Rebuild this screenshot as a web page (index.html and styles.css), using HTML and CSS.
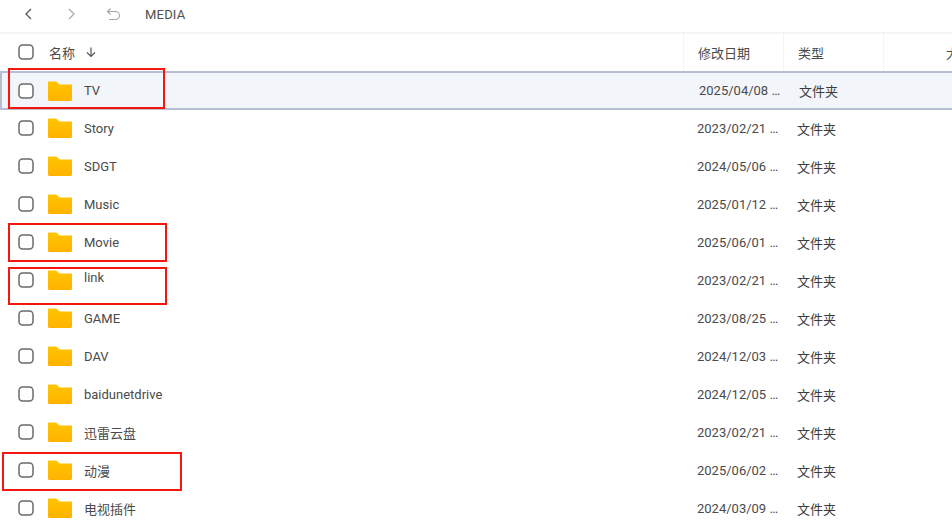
FILE: index.html
```html
<!DOCTYPE html>
<html lang="zh">
<head>
<meta charset="utf-8">
<title>MEDIA</title>
<link rel="stylesheet" href="styles.css">
</head>
<body>
<svg class="defs" width="0" height="0" aria-hidden="true">
  <defs>
    <linearGradient id="fg" x1="0" y1="0" x2="0" y2="1"><stop offset="0" stop-color="#ffc400"/><stop offset="1" stop-color="#ffb300"/></linearGradient>
    <symbol id="folder" viewBox="0 0 24 20"><path d="M1 0.5h6.6c.5 0 .9.2 1.2.5L11.6 3.4H23c.6 0 1 .4 1 1V18.500c0 .8-.6 1.500-1.400 1.500H1.400C.6 20 0 19.300 0 18.500V1.500C0 .9.400.5 1 .5z" fill="url(#fg)"/></symbol>
    <symbol id="check" viewBox="0 0 16 16"><rect x="1" y="1" width="14" height="14" rx="3.500" fill="#fff" stroke="#6b6b6b" stroke-width="1.500"/></symbol>
  </defs>
</svg>
<main class="page">
  <nav class="toolbar">
    <svg class="tool back" viewBox="0 0 16 16"><path d="M10 3 5 8l5 5" fill="none" stroke="#555" stroke-width="1.300"/></svg>
    <svg class="tool fwd" viewBox="0 0 16 16"><path d="M6 3l5 5-5 5" fill="none" stroke="#aaa" stroke-width="1.300"/></svg>
    <svg class="tool up" viewBox="0 0 16 16"><path d="M5.500 2.500 2.500 5.500l3 3M2.500 5.500h8a3.500 3.500 0 0 1 0 8H4" fill="none" stroke="#a5a5a5" stroke-width="1.100"/></svg>
    <span class="crumb">MEDIA</span>
  </nav>
  <header class="row head">
    <div class="name-cell">
      <svg class="check"><use href="#check"/></svg>
      <span class="head-name">名称</span>
      <svg class="sort" viewBox="0 0 12 12"><path d="M6 1.500v9M2 6.500l4 4 4-4" fill="none" stroke="#555" stroke-width="1.200"/></svg>
    </div>
    <div class="cell head-cell">修改日期</div>
    <div class="cell head-cell">类型</div>
    <div class="cell head-cell size">大小</div>
  </header>
  <section class="list">
    <div class="row item selected"><div class="name-cell"><svg class="check"><use href="#check"/></svg><svg class="folder"><use href="#folder"/></svg><span class="name">TV</span></div><div class="cell date">2025/04/08 10:20</div><div class="cell type">文件夹</div></div>
    <div class="row item"><div class="name-cell"><svg class="check"><use href="#check"/></svg><svg class="folder"><use href="#folder"/></svg><span class="name">Story</span></div><div class="cell date">2023/02/21 18:03</div><div class="cell type">文件夹</div></div>
    <div class="row item"><div class="name-cell"><svg class="check"><use href="#check"/></svg><svg class="folder"><use href="#folder"/></svg><span class="name">SDGT</span></div><div class="cell date">2024/05/06 09:12</div><div class="cell type">文件夹</div></div>
    <div class="row item"><div class="name-cell"><svg class="check"><use href="#check"/></svg><svg class="folder"><use href="#folder"/></svg><span class="name">Music</span></div><div class="cell date">2025/01/12 21:40</div><div class="cell type">文件夹</div></div>
    <div class="row item"><div class="name-cell"><svg class="check"><use href="#check"/></svg><svg class="folder"><use href="#folder"/></svg><span class="name">Movie</span></div><div class="cell date">2025/06/01 12:30</div><div class="cell type">文件夹</div></div>
    <div class="row item"><div class="name-cell"><svg class="check"><use href="#check"/></svg><svg class="folder"><use href="#folder"/></svg><span class="name link">link</span></div><div class="cell date">2023/02/21 18:05</div><div class="cell type">文件夹</div></div>
    <div class="row item"><div class="name-cell"><svg class="check"><use href="#check"/></svg><svg class="folder"><use href="#folder"/></svg><span class="name">GAME</span></div><div class="cell date">2023/08/25 15:22</div><div class="cell type">文件夹</div></div>
    <div class="row item"><div class="name-cell"><svg class="check"><use href="#check"/></svg><svg class="folder"><use href="#folder"/></svg><span class="name">DAV</span></div><div class="cell date">2024/12/03 08:11</div><div class="cell type">文件夹</div></div>
    <div class="row item"><div class="name-cell"><svg class="check"><use href="#check"/></svg><svg class="folder"><use href="#folder"/></svg><span class="name">baidunetdrive</span></div><div class="cell date">2024/12/05 19:47</div><div class="cell type">文件夹</div></div>
    <div class="row item"><div class="name-cell"><svg class="check"><use href="#check"/></svg><svg class="folder"><use href="#folder"/></svg><span class="name">迅雷云盘</span></div><div class="cell date">2023/02/21 18:09</div><div class="cell type">文件夹</div></div>
    <div class="row item"><div class="name-cell"><svg class="check"><use href="#check"/></svg><svg class="folder"><use href="#folder"/></svg><span class="name">动漫</span></div><div class="cell date">2025/06/02 20:15</div><div class="cell type">文件夹</div></div>
    <div class="row item"><div class="name-cell"><svg class="check"><use href="#check"/></svg><svg class="folder"><use href="#folder"/></svg><span class="name">电视插件</span></div><div class="cell date">2024/03/09 11:26</div><div class="cell type">文件夹</div></div>
  </section>
  <div class="mark mark-tv"></div>
  <div class="mark mark-movie"></div>
  <div class="mark mark-link"></div>
  <div class="mark mark-anime"></div>
</main>
</body>
</html>
```
FILE: styles.css
```css
* { box-sizing: border-box; }
html, body { margin: 0; height: 100%; overflow: hidden; background: #fff; }
.defs { position: absolute; }
.page {
  position: relative;
  width: 952px;
  height: 532px;
  overflow: hidden;
  font-family: Roboto, "Noto Sans CJK SC", sans-serif;
  font-size: 13px;
  color: #4a4a4a;
}
.toolbar {
  display: flex;
  align-items: center;
  height: 34px;
  padding: 0 0 4px 21px;
  border-bottom: 2px solid #f3f5f8;
}
.tool { width: 16px; height: 16px; flex: none; }
.fwd { margin-left: 26px; }
.up { margin-left: 26px; }
.crumb { margin-left: 24px; font-size: 13px; color: #4f4f4f; letter-spacing: .2px; }
.row {
  display: grid;
  grid-template-columns: 683px 100px 100px 100px;
  width: 983px;
  align-items: center;
}
.head { height: 36px; }
.name-cell { display: flex; align-items: center; height: 100%; padding-left: 18px; }
.check { width: 16px; height: 16px; flex: none; }
.head-name { margin-left: 15px; }
.sort { width: 12px; height: 12px; margin-left: 10px; flex: none; }
.cell {
  padding-left: 14px;
  white-space: nowrap;
  overflow: hidden;
  text-overflow: ellipsis;
}
.head-cell {
  height: 100%;
  display: flex;
  align-items: center;
  border-left: 1px solid #f3f4f6;
  padding-left: 14px;
}
.head-cell + .head-cell { padding-left: 14px; }
.size { border-right: 1px solid #f3f4f6; justify-content: flex-end; padding-right: 10px; }
.list { margin-top: 1px; }
.item { height: 38px; }
.selected {
  width: 952px;
  grid-template-columns: 682px 100px 100px 68px;
  height: 39px;
  margin-bottom: -1px;
  background: #f2f5f9;
  border: 2px solid #b7bdd2;
  border-right: 0;
  border-left-width: 2px;
}
.selected .name-cell { padding-left: 16px; }
.selected .cell { padding-left: 15px; }
.folder { width: 24px; height: 20px; margin-left: 14px; flex: none; }
.name { margin-left: 12px; }
.link { align-self: flex-start; margin-top: 9px; }
.date { padding-left: 14px; color: #4a4a4a; }
.type { color: #3c3c3c; }
.mark { position: absolute; border: 2px solid #f5170f; }
.mark-tv { left: 8px; top: 68px; width: 157px; height: 41px; }
.mark-movie { left: 8px; top: 223px; width: 159px; height: 39px; }
.mark-link { left: 8px; top: 267px; width: 159px; height: 38px; }
.mark-anime { left: 2px; top: 452px; width: 180px; height: 39px; }
```
